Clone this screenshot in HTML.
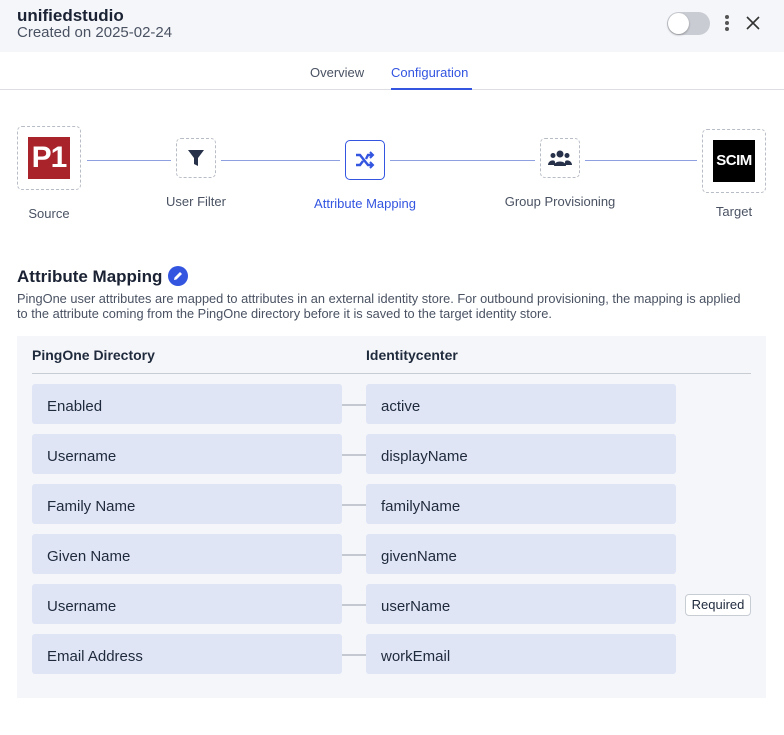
<!DOCTYPE html>
<html><head><meta charset="utf-8"><style>
*{box-sizing:border-box;margin:0;padding:0}
body{width:784px;height:735px;background:#fff;font-family:"Liberation Sans",Arial,sans-serif;color:#1f2a3c;position:relative;overflow:hidden}
.abs{position:absolute}
.hdr{left:0;top:0;width:784px;height:52px;background:#f5f6fa}
.t{white-space:nowrap}
.dash{border:1px dashed #b8bcc4;border-radius:5px}
.line{height:1px;background:#8fa0e0;top:160px}
.lbl{font-size:13px;color:#4a5262;text-align:center;width:160px}
.box{background:#dfe5f5;border-radius:3px;height:40px;font-size:15px;color:#1f2a3c;padding-left:15px;padding-top:3px;line-height:40px;overflow:hidden}
.conn{height:2px;background:#c4c8d0;left:342px;width:24px}
</style></head><body>
<div class="abs hdr"></div>
<div class="abs t" style="left:17px;top:6px;font-size:17px;font-weight:bold;color:#1a2233">unifiedstudio</div>
<div class="abs t" style="left:17px;top:24px;font-size:15px;color:#4a5262">Created on 2025-02-24</div>
<div class="abs" style="left:667px;top:12px;width:43px;height:23px;border-radius:12px;background:#c9ccd2"></div>
<div class="abs" style="left:668px;top:13px;width:21px;height:21px;border-radius:50%;background:#fff;box-shadow:0 1px 2px rgba(0,0,0,.3)"></div>
<div class="abs" style="left:725px;top:15px;width:4px;height:4px;border-radius:2px;background:#555;box-shadow:0 6px 0 #555,0 12px 0 #555"></div>
<svg class="abs" style="left:746px;top:16px" width="14" height="14"><path d="M1 1L13 13M13 1L1 13" stroke="#333" stroke-width="1.6"/></svg>
<div class="abs t" style="left:310px;top:65px;font-size:13px;color:#4a5262">Overview</div>
<div class="abs t" style="left:391px;top:65px;font-size:13px;color:#3355e0">Configuration</div>
<div class="abs" style="left:0;top:89px;width:784px;height:1px;background:#dcdee3"></div>
<div class="abs" style="left:391px;top:88px;width:81px;height:2px;background:#3355e0"></div>

<div class="abs line" style="left:87px;width:84px"></div>
<div class="abs line" style="left:221px;width:119px"></div>
<div class="abs line" style="left:390px;width:145px"></div>
<div class="abs line" style="left:585px;width:112px"></div>

<div class="abs dash" style="left:17px;top:126px;width:64px;height:64px"></div>
<div class="abs" style="left:28px;top:137px;width:42px;height:42px;background:#a8232a;color:#fff;font-weight:bold;font-size:30px;line-height:42px;text-align:center;letter-spacing:-1px">P1</div>
<div class="abs dash" style="left:176px;top:138px;width:40px;height:40px"></div>
<svg class="abs" style="left:186px;top:148px" width="20" height="20" viewBox="0 0 20 20"><path d="M2 2H18L12 10V18L8 16V10Z" fill="#27324a"/></svg>
<div class="abs" style="left:345px;top:140px;width:40px;height:40px;border:1px solid #3355e0;border-radius:5px"></div>
<svg class="abs" style="left:355px;top:150px" width="20" height="20" viewBox="0 0 20 20" fill="none" stroke="#3355e0" stroke-width="2.4"><path d="M1 5H5L13 15H17M1 15H5L8 11M11 9L13 5H17"/><path d="M15 2L18 5L15 8M15 12L18 15L15 18" stroke-width="2"/></svg>
<div class="abs dash" style="left:540px;top:138px;width:40px;height:40px"></div>
<svg class="abs" style="left:548px;top:149px" width="24" height="18" viewBox="0 0 24 18" fill="#27324a"><circle cx="12" cy="5" r="3.5"/><circle cx="5" cy="6.5" r="2.5"/><circle cx="19" cy="6.5" r="2.5"/><path d="M6 17C6 11 18 11 18 17Z"/><path d="M0 16C0 11 7 10 7 13V16Z"/><path d="M24 16C24 11 17 10 17 13V16Z"/></svg>
<div class="abs dash" style="left:702px;top:129px;width:64px;height:64px"></div>
<div class="abs" style="left:713px;top:140px;width:42px;height:42px;background:#000;color:#fff;font-weight:bold;font-size:15px;line-height:42px;text-align:center;letter-spacing:-0.5px">SCIM</div>

<div class="abs lbl t" style="left:-31px;top:206px">Source</div>
<div class="abs lbl t" style="left:116px;top:194px">User Filter</div>
<div class="abs lbl t" style="left:285px;top:196px;color:#3355e0">Attribute Mapping</div>
<div class="abs lbl t" style="left:480px;top:194px">Group Provisioning</div>
<div class="abs lbl t" style="left:654px;top:204px">Target</div>

<div class="abs t" style="left:17px;top:267px;font-size:17px;font-weight:bold;color:#1a2233">Attribute Mapping</div>
<div class="abs" style="left:168px;top:266px;width:20px;height:20px;border-radius:50%;background:#3355e0"></div>
<svg class="abs" style="left:172px;top:270px" width="12" height="12" viewBox="0 0 12 12"><path d="M2 10L2.5 7.5L8 2L10 4L4.5 9.5Z" fill="#fff"/></svg>
<div class="abs" style="left:17px;top:291px;width:752px;font-size:12.8px;line-height:15px;color:#4a5262">PingOne user attributes are mapped to attributes in an external identity store. For outbound provisioning, the mapping is applied<br>to the attribute coming from the PingOne directory before it is saved to the target identity store.</div>

<div class="abs" style="left:17px;top:336px;width:749px;height:362px;background:#f5f6fa"></div>
<div class="abs t" style="left:32px;top:347px;font-size:14px;font-weight:bold">PingOne Directory</div>
<div class="abs t" style="left:366px;top:347px;font-size:14px;font-weight:bold">Identitycenter</div>
<div class="abs" style="left:32px;top:373px;width:719px;height:1px;background:#c8ccd3"></div>

<div class="abs box" style="left:32px;top:384px;width:310px">Enabled</div><div class="abs conn" style="top:404px"></div><div class="abs box" style="left:366px;top:384px;width:310px">active</div>
<div class="abs box" style="left:32px;top:434px;width:310px">Username</div><div class="abs conn" style="top:454px"></div><div class="abs box" style="left:366px;top:434px;width:310px">displayName</div>
<div class="abs box" style="left:32px;top:484px;width:310px">Family Name</div><div class="abs conn" style="top:504px"></div><div class="abs box" style="left:366px;top:484px;width:310px">familyName</div>
<div class="abs box" style="left:32px;top:534px;width:310px">Given Name</div><div class="abs conn" style="top:554px"></div><div class="abs box" style="left:366px;top:534px;width:310px">givenName</div>
<div class="abs box" style="left:32px;top:584px;width:310px">Username</div><div class="abs conn" style="top:604px"></div><div class="abs box" style="left:366px;top:584px;width:310px">userName</div>
<div class="abs box" style="left:32px;top:634px;width:310px">Email Address</div><div class="abs conn" style="top:654px"></div><div class="abs box" style="left:366px;top:634px;width:310px">workEmail</div>
<div class="abs t" style="left:685px;top:594px;width:66px;height:22px;border:1px solid #c8ccd3;border-radius:4px;background:#fff;font-size:13px;line-height:20px;text-align:center">Required</div>
</body></html>
